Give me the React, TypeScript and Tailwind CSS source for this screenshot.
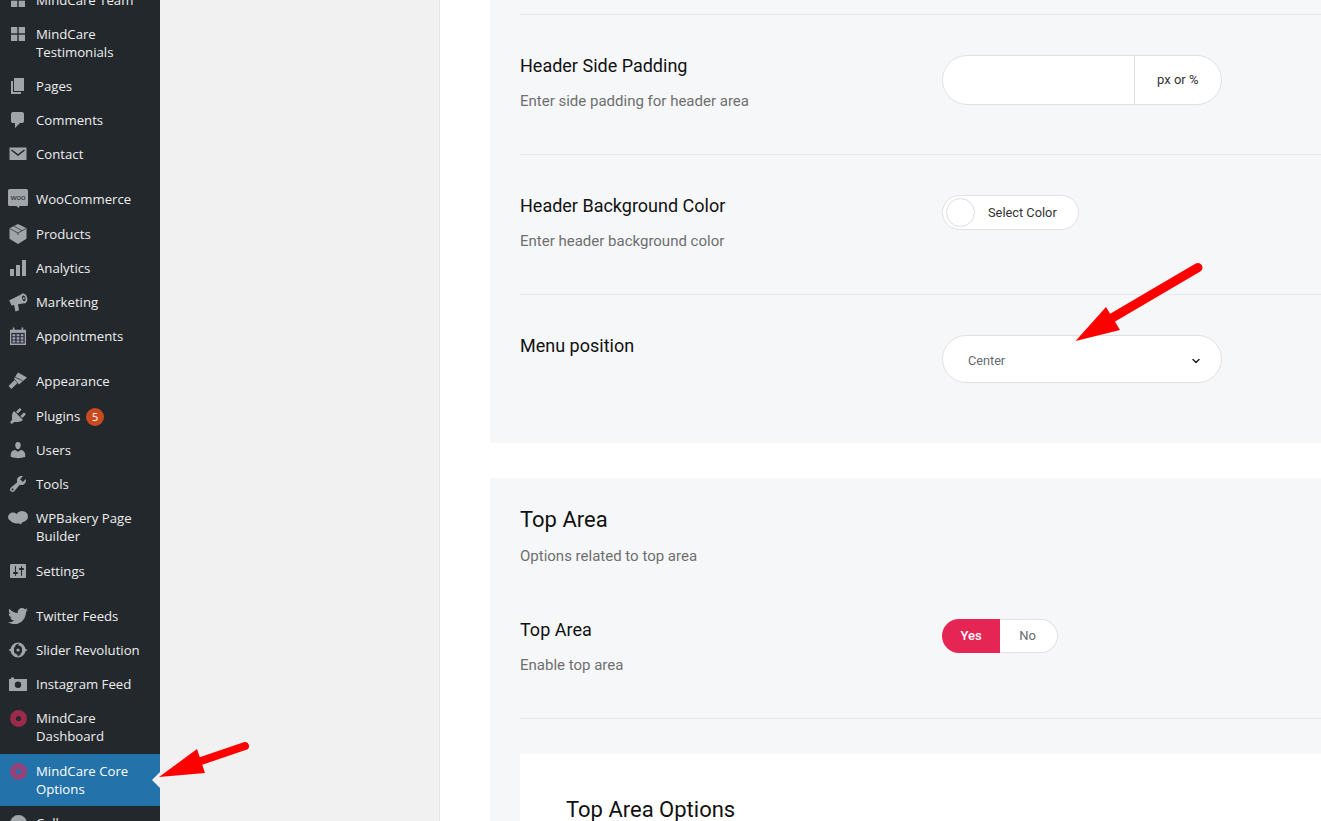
import React from 'react';
import { ChevronDown } from 'lucide-react';
import { FaTwitter } from 'react-icons/fa';

const DARK = '#23282d';

const iconPaths: Record<string, React.ReactNode> = {
  grid: (
    <>
      <rect x="3" y="3" width="6.3" height="6.3" />
      <rect x="10.7" y="3" width="6.3" height="6.3" />
      <rect x="3" y="10.7" width="6.3" height="6.3" />
      <rect x="10.7" y="10.7" width="6.3" height="6.3" />
    </>
  ),
  pages: <path d="M6 15V2h10v13H6zm-1 1h8v2H3V5h2v11z" />,
  comments: <path d="M5 2h9q.82 0 1.41.59T16 4v7q0 .82-.59 1.41T14 13h-2l-5 5v-5H5q-.82 0-1.41-.59T3 11V4q0-.82.59-1.41T5 2z" />,
  contact: (
    <>
      <rect x="1.5" y="3.5" width="17" height="12.5" />
      <path d="M3.5 6l6.5 5 6.5-5" fill="none" stroke={DARK} strokeWidth="1.5" />
    </>
  ),
  woo: (
    <>
      <path d="M1.5 0h17a1.5 1.5 0 0 1 1.5 1.5v14a1.5 1.5 0 0 1-1.5 1.5h-7l-1 2-2-2H1.5a1.5 1.5 0 0 1-1.5-1.5V1.5a1.5 1.5 0 0 1 1.5-1.5z" />
      <text x="10" y="11" textAnchor="middle" fontSize="8" fontFamily="'Liberation Sans', sans-serif" fill={DARK}>
        woo
      </text>
    </>
  ),
  products: (
    <>
      <path d="M10 0l8.5 4.2v10.6L10 20l-8.5-5.2V4.2z" />
      <path d="M1.8 4.6L10 9l8.2-4.6M10 9v2M6 2.2l8 4.4" fill="none" stroke={DARK} strokeWidth="0.7" />
    </>
  ),
  analytics: (
    <>
      <rect x="2" y="11" width="4" height="7" />
      <rect x="8" y="7" width="4" height="11" />
      <rect x="14" y="2" width="4" height="16" />
    </>
  ),
  marketing: (
    <>
      <path d="M1 8.5L15 1.5l3 9.5-8 1.2 1 6-3.5 1.2-1.5-6.4-2.5.4-2-4.4z" />
      <ellipse cx="15.8" cy="6.3" rx="3.4" ry="5" transform="rotate(-15 15.8 6.3)" />
      <ellipse cx="15.8" cy="6.3" rx="1.7" ry="2.9" transform="rotate(-15 15.8 6.3)" fill={DARK} />
      <circle cx="15.8" cy="6.3" r="1" />
    </>
  ),
  calendar: (
    <g transform="translate(2 1) scale(.8 .9)">
      <path d="M0 3h3.5V0.5h2V3h9V0.5h2V3H20v17H0z" />
      <path d="M1.6 6.5h16.8V18.4H1.6z" fill="#2c2d40" />
      <path d="M3.2 8h3.4v2.3H3.2zM8.3 8h3.4v2.3H8.3zM13.4 8h3.4v2.3h-3.4zM3.2 11.5h3.4v2.3H3.2zM8.3 11.5h3.4v2.3H8.3zM13.4 11.5h3.4v2.3h-3.4zM3.2 15h3.4v2.3H3.2zM8.3 15h3.4v2.3H8.3zM13.4 15h3.4v2.3h-3.4z" />
    </g>
  ),
  appearance: (
    <>
      <path d="M10 1.5l9 5-8 7-5-6z" />
      <path d="M8 10.5L2 16.5" fill="none" stroke="#a0a5aa" strokeWidth="4" />
      <path d="M7 6.2l7.4 3.4" fill="none" stroke={DARK} strokeWidth="0.8" />
    </>
  ),
  plugins: <path d="M13.11 4.36L9.87 7.6 8 5.73l3.24-3.24c.35-.34 1.05-.2 1.56.32.52.51.66 1.21.31 1.55zm-8 1.77l.91-1.12 9.01 9.01-1.19.84c-.71.71-2.63 1.16-3.82 1.16H6.14L4.9 17.26c-.59.59-1.54.59-2.12 0-.59-.58-.59-1.53 0-2.12l1.24-1.24v-3.88c0-1.13.4-3.19 1.09-3.89zm7.26 3.97l3.24-3.24c.34-.35 1.04-.21 1.55.31.52.51.66 1.21.31 1.55l-3.24 3.25z" />,
  users: <path d="M10 9.25c-2.27 0-2.73-3.44-2.73-3.44C7 4.02 7.82 2 9.97 2c2.16 0 2.98 2.02 2.71 3.81 0 0-.41 3.44-2.68 3.44zm0 2.57L12.72 10c2.39 0 4.52 2.33 4.52 4.53v2.49s-3.65 1.13-7.24 1.13c-3.65 0-7.24-1.13-7.24-1.13v-2.49c0-2.25 1.94-4.48 4.47-4.48z" />,
  tools: <path d="M16.68 9.77c-1.34 1.34-3.3 1.67-4.95.99l-5.41 6.52c-.99.99-2.59.99-3.58 0s-.99-2.59 0-3.57l6.52-5.42c-.68-1.65-.35-3.61.99-4.95 1.28-1.28 3.12-1.62 4.72-1.06l-2.89 2.89 2.82 2.82 2.86-2.87c.53 1.58.18 3.39-1.08 4.65zM3.81 16.21c.4.39 1.04.39 1.43 0 .4-.4.4-1.04 0-1.43-.39-.4-1.03-.4-1.43 0-.39.39-.39 1.03 0 1.43z" />,
  bakery: (
    <>
      <ellipse cx="5" cy="9" rx="5" ry="4.4" />
      <ellipse cx="14" cy="8.4" rx="6" ry="5.4" />
      <ellipse cx="9.5" cy="12" rx="7" ry="3.6" />
      <path d="M11 15h3l-1.5 1.6z" />
    </>
  ),
  settings: <path d="M18 16V4c0-.55-.45-1-1-1H3c-.55 0-1 .45-1 1v12c0 .55.45 1 1 1h14c.55 0 1-.45 1-1zM8 11h1c.55 0 1 .45 1 1s-.45 1-1 1H8v1.5c0 .28-.22.5-.5.5s-.5-.22-.5-.5V13H6c-.55 0-1-.45-1-1s.45-1 1-1h1V5.5c0-.28.22-.5.5-.5s.5.22.5.5V11zm5-2h-1c-.55 0-1-.45-1-1s.45-1 1-1h1V5.5c0-.28.22-.5.5-.5s.5.22.5.5V7h1c.55 0 1 .45 1 1s-.45 1-1 1h-1v5.5c0 .28-.22.5-.5.5s-.5-.22-.5-.5V9z" />,
  slider: (
    <>
      <circle cx="10" cy="10" r="6" fill="none" stroke="#a0a5aa" strokeWidth="3" />
      <path d="M0.5 10L6 6.5v7zM19.5 10L14 6.5v7z" />
      <path d="M7 5.5l3.5-2v4zM13 14.5l-3.5 2v-4z" fill={DARK} />
      <circle cx="10" cy="10" r="1.6" />
    </>
  ),
  instagram: (
    <>
      <path d="M1 5h2V3.5h3V5h13v12H1z" />
      <circle cx="10" cy="10.8" r="3.2" fill={DARK} />
    </>
  ),
};

type MenuItem = { label: React.ReactNode; icon: string; gapAfter?: boolean; tall?: boolean; badge?: string };

const menu: MenuItem[] = [
  { label: 'MindCare Team', icon: 'grid' },
  { label: <>MindCare<br />Testimonials</>, icon: 'grid' },
  { label: 'Pages', icon: 'pages' },
  { label: 'Comments', icon: 'comments' },
  { label: 'Contact', icon: 'contact', gapAfter: true },
  { label: 'WooCommerce', icon: 'woo', tall: true },
  { label: 'Products', icon: 'products' },
  { label: 'Analytics', icon: 'analytics' },
  { label: 'Marketing', icon: 'marketing' },
  { label: 'Appointments', icon: 'calendar', gapAfter: true },
  { label: 'Appearance', icon: 'appearance', tall: true },
  { label: 'Plugins', icon: 'plugins', badge: '5' },
  { label: 'Users', icon: 'users' },
  { label: 'Tools', icon: 'tools' },
  { label: <>WPBakery Page<br />Builder</>, icon: 'bakery', tall: true },
  { label: 'Settings', icon: 'settings', gapAfter: true },
  { label: 'Twitter Feeds', icon: 'twitter' },
  { label: 'Slider Revolution', icon: 'slider' },
  { label: 'Instagram Feed', icon: 'instagram' },
];

function MenuIcon({ name }: { name: string }) {
  if (name === 'twitter') {
    return <FaTwitter className="h-5 w-5 text-[#a0a5aa]" />;
  }
  return (
    <svg viewBox="0 0 20 20" className="h-5 w-5 fill-[#a0a5aa]">
      {iconPaths[name]}
    </svg>
  );
}

function MindCareIcon({ ring, hole }: { ring: string; hole: string }) {
  return (
    <svg viewBox="0 0 20 20" className="h-[17px] w-[17px]">
      <circle cx="10" cy="10" r="6.5" fill={hole} stroke={ring} strokeWidth="7" />
    </svg>
  );
}

function Row({ title, desc, children }: { title: string; desc?: string; children: React.ReactNode }) {
  return (
    <div className="flex h-[140px] border-t border-[#e9eaed] pt-10">
      <div className="w-[422px] shrink-0">
        <h4 className="text-[18px] leading-[21px] text-[#111]">{title}</h4>
        {desc && <p className="mt-[15px] text-[15px] leading-[21px] text-[#6f6f6f]">{desc}</p>}
      </div>
      {children}
    </div>
  );
}

export default function App() {
  return (
    <div className="relative flex h-[821px] w-[1321px] overflow-hidden bg-white font-['Roboto',sans-serif]">
      <aside className="w-[160px] shrink-0 bg-[#23282d] font-['Open_Sans',sans-serif] text-[13.2px] leading-[18px] text-[#eee]">
        <div className="-mt-[17px]">
          {menu.map((item, i) => (
            <div key={i} className={item.gapAfter ? 'mb-[11px]' : ''}>
              <div className={`flex items-start pl-2 pt-2 ${item.tall ? 'pb-[9px]' : 'pb-2'}`}>
                <span className="flex h-[18px] w-[28px] shrink-0 items-center">
                  <MenuIcon name={item.icon} />
                </span>
                <span>{item.label}</span>
                {item.badge && (
                  <span className="-mb-px ml-[6px] mt-px flex h-[18px] w-[18px] items-center justify-center rounded-full bg-[#ca4a1f] text-[11px] text-white">
                    {item.badge}
                  </span>
                )}
              </div>
            </div>
          ))}
          <div className="flex items-start pb-[9px] pl-2 pt-2">
            <span className="flex h-[18px] w-[28px] shrink-0 items-center pl-[2px]">
              <MindCareIcon ring="#9b2a4b" hole="#23282d" />
            </span>
            <span>MindCare<br />Dashboard</span>
          </div>
          <div className="relative flex items-start bg-[#2472aa] pb-2 pl-2 pt-2 text-white">
            <span className="flex h-[18px] w-[28px] shrink-0 items-center pl-[2px]">
              <MindCareIcon ring="#96427a" hole="#2472aa" />
            </span>
            <span>MindCare Core<br />Options</span>
            <span className="absolute right-0 top-[18px] h-0 w-0 border-y-[8px] border-r-[8px] border-y-transparent border-r-[#f1f1f1]" />
          </div>
          <div className="flex items-start pb-2 pl-2 pt-2">
            <span className="flex h-[18px] w-[28px] shrink-0 items-center pl-[2px]">
              <svg viewBox="0 0 20 20" className="h-[17px] w-[17px] fill-[#a0a5aa]">
                <circle cx="10" cy="10" r="10" />
              </svg>
            </span>
            <span>Collapse</span>
          </div>
        </div>
      </aside>

      <div className="w-[280px] shrink-0 border-r border-[#e5e5e5] bg-[#f1f1f1]" />

      <main className="flex-1 pl-[50px]">
        <section className="bg-[#f6f7f9] pl-[30px] pt-[14px]">
          <Row title="Header Side Padding" desc="Enter side padding for header area">
            <div className="flex h-[50px] w-[280px] overflow-hidden rounded-[25px] border border-[#e1e1e4] bg-white">
              <input className="min-w-0 flex-1 outline-none" aria-label="Header side padding" />
              <span className="flex w-[87px] items-center border-l border-[#e1e1e4] pl-[22px] text-[13px] text-[#333]">px or %</span>
            </div>
          </Row>
          <Row title="Header Background Color" desc="Enter header background color">
            <div className="flex h-[35px] w-[137px] items-center rounded-[18px] border border-[#e1e1e4] bg-white pl-[3px]">
              <span className="h-[29px] w-[29px] rounded-full border border-[#dcdcdf] bg-white" />
              <span className="ml-[13px] text-[12.8px] text-[#333]">Select Color</span>
            </div>
          </Row>
          <div className="flex h-[149px] border-t border-[#e9eaed] pt-10">
            <div className="w-[422px] shrink-0">
              <h4 className="text-[18px] leading-[21px] text-[#111]">Menu position</h4>
            </div>
            <div className="flex h-[48px] w-[280px] items-center justify-between rounded-[24px] border border-[#e1e1e4] bg-white pl-[25px] pr-[19px] pt-[4px] text-[12.7px] text-[#666a70]">
              <span>Center</span>
              <ChevronDown className="h-3 w-3 text-[#222]" strokeWidth={3} />
            </div>
          </div>
        </section>

        <section className="mt-[35px] bg-[#f6f7f9] pl-[30px] pt-[28px]">
          <h3 className="text-[22px] leading-[28px] text-[#111]">Top Area</h3>
          <p className="mt-[12px] text-[15px] leading-[21px] text-[#6f6f6f]">Options related to top area</p>
          <div className="mt-[52px] flex h-[100px] border-b border-[#e9eaed]">
            <div className="w-[422px] shrink-0">
              <h4 className="text-[18px] leading-[21px] text-[#111]">Top Area</h4>
              <p className="mt-[15px] text-[15px] leading-[21px] text-[#6f6f6f]">Enable top area</p>
            </div>
            <div className="flex h-[34px] w-[116px] text-[13px]">
              <span className="flex w-[58px] items-center justify-center rounded-l-[17px] bg-[#e52654] font-medium text-white">Yes</span>
              <span className="flex flex-1 items-center justify-center rounded-r-[17px] border border-l-0 border-[#e1e1e4] bg-white pr-[2px] text-[#666a70]">No</span>
            </div>
          </div>
          <div className="mt-[35px] bg-white pl-[46px] pt-[42px]">
            <h3 className="text-[22px] leading-[28px] text-[#111]">Top Area Options</h3>
          </div>
        </section>
      </main>

      {/* annotation arrows */}
      <svg viewBox="0 0 100 50" className="absolute left-[155px] top-[735px] h-[50px] w-[100px]">
        <path d="M4 42L42 14 50 38z" fill="#ff0000" />
        <path d="M40 28L90 11" stroke="#ff0000" strokeWidth="8" strokeLinecap="round" />
      </svg>
      <svg viewBox="0 0 140 90" className="absolute left-[1070px] top-[260px] h-[90px] w-[140px]">
        <path d="M5.5 81L36 47 50 70z" fill="#ff0000" />
        <path d="M42 58L128 7.5" stroke="#ff0000" strokeWidth="9" strokeLinecap="round" />
      </svg>
    </div>
  );
}
